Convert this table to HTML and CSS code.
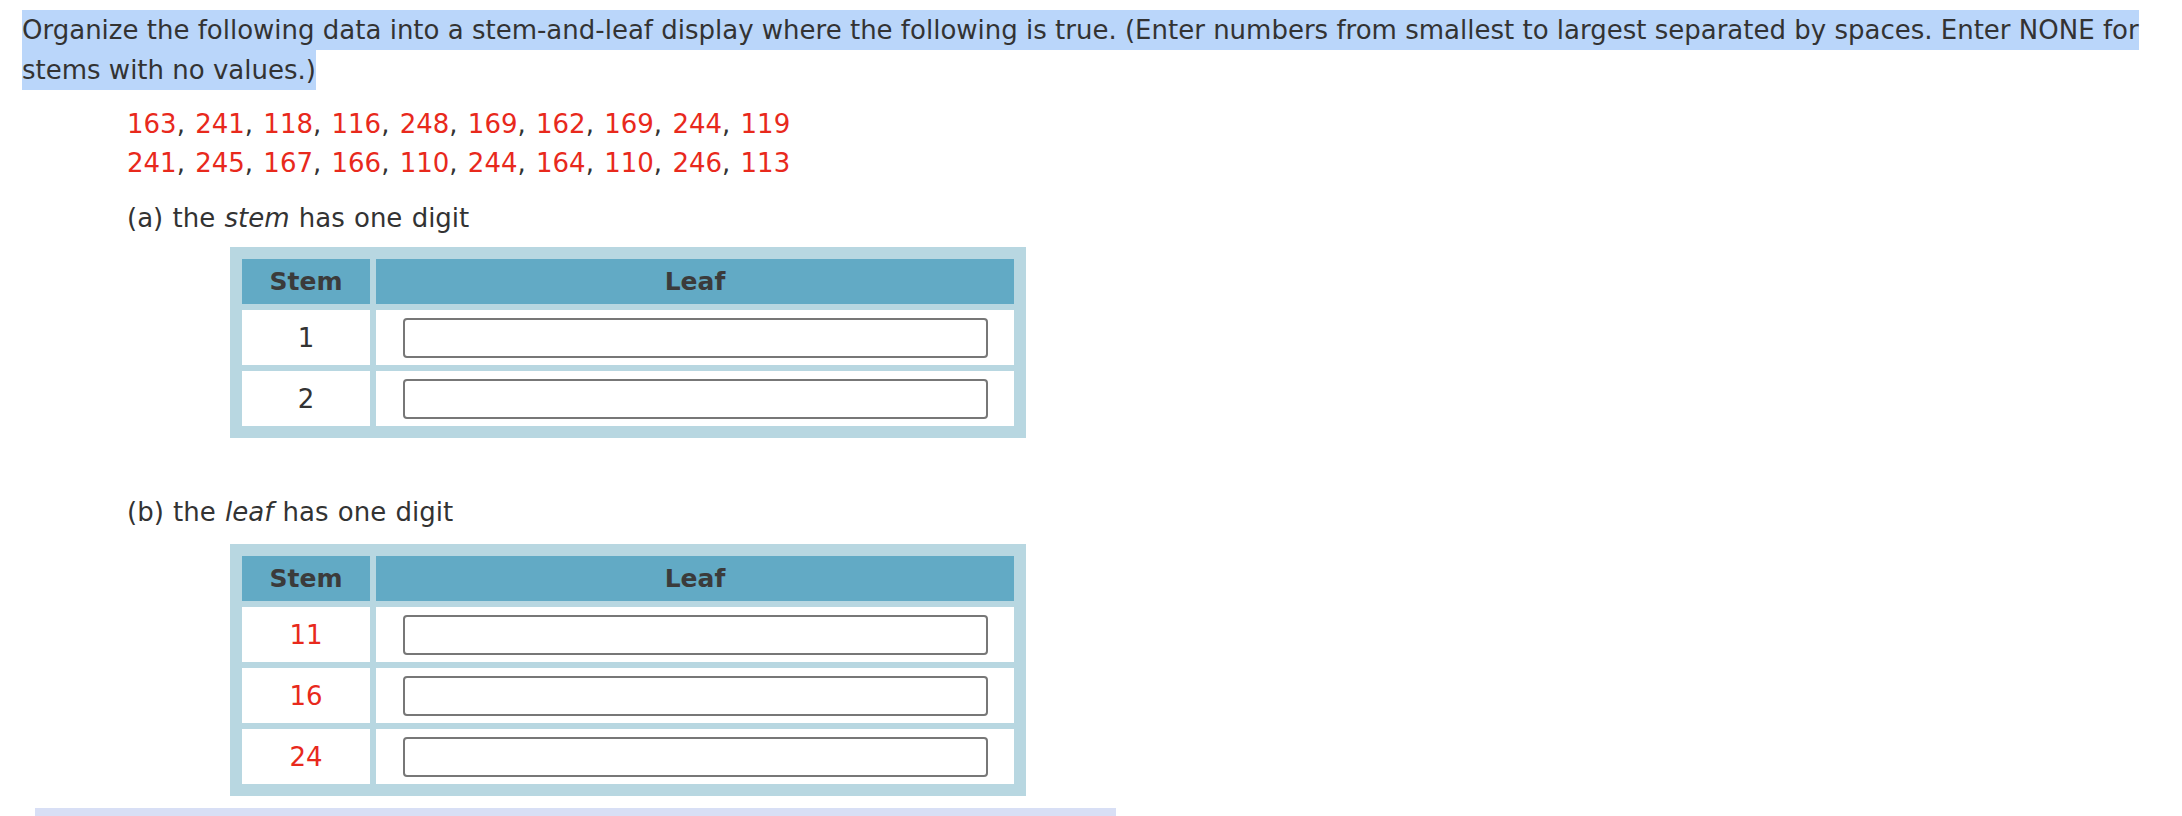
FILE: index.html
```html
<!DOCTYPE html>
<html lang="en">
<head>
  <meta charset="UTF-8" />
  <title>Stem-and-Leaf Display</title>
  <link rel="stylesheet" href="styles.css">
</head>
<body>

  <div class="question">
    <p class="prompt"><span class="hl">Organize the following data into a stem-and-leaf display where the following is true. (Enter numbers from smallest to largest separated by spaces. Enter NONE for stems with no values.)</span></p>

    <div class="data">
      <div><span class="red">163</span>, <span class="red">241</span>, <span class="red">118</span>, <span class="red">116</span>, <span class="red">248</span>, <span class="red">169</span>, <span class="red">162</span>, <span class="red">169</span>, <span class="red">244</span>, <span class="red">119</span></div>
      <div><span class="red">241</span>, <span class="red">245</span>, <span class="red">167</span>, <span class="red">166</span>, <span class="red">110</span>, <span class="red">244</span>, <span class="red">164</span>, <span class="red">110</span>, <span class="red">246</span>, <span class="red">113</span></div>
    </div>

    <p class="part part-a">(a) the <em>stem</em> has one digit</p>
    <div class="frame">
      <table class="stem-leaf">
        <tr><th class="stem">Stem</th><th>Leaf</th></tr>
        <tr><td class="stem">1</td><td><input type="text" /></td></tr>
        <tr><td class="stem">2</td><td><input type="text" /></td></tr>
      </table>
    </div>

    <p class="part part-b">(b) the <em>leaf</em> has one digit</p>
    <div class="frame">
      <table class="stem-leaf">
        <tr><th class="stem">Stem</th><th>Leaf</th></tr>
        <tr><td class="stem red">11</td><td><input type="text" /></td></tr>
        <tr><td class="stem red">16</td><td><input type="text" /></td></tr>
        <tr><td class="stem red">24</td><td><input type="text" /></td></tr>
      </table>
    </div>

    <div class="next-band"></div>
  </div>

</body>
</html>
```

FILE: styles.css
```css
body {
  font-family: Verdana, 'DejaVu Sans', sans-serif;
  font-size: 26px;
  line-height: 40px;
  color: #333333;
  background: #ffffff;
  margin: 0;
  padding-top: 10px;
}

.question {
  padding-left: 22px;
  padding-right: 4px;
}

.prompt {
  margin: 0;
}

.hl {
  background-color: #bad6fa;
  padding: 5px 0;
}

.red {
  color: #e8291c;
}

.data {
  margin: 15px 0 0 105px;
  line-height: 39px;
  word-spacing: 2px;
}

.part {
  margin: 15px 0 0 105px;
  word-spacing: 1px;
}

.part-b {
  margin-top: 54px;
}

.frame {
  background-color: #b8d7e1;
  width: 784px;
  padding: 6px;
  margin: 9px 0 0 208px;
}

.part-b + .frame {
  margin-top: 12px;
}

.stem-leaf {
  width: 100%;
  border-spacing: 6px;
  border-collapse: separate;
}

.stem-leaf th {
  background-color: #62aac5;
  color: #3b3b3b;
  font-size: 25px;
  font-weight: bold;
  height: 45px;
  padding: 0;
  text-align: center;
}

.stem-leaf td {
  background-color: #ffffff;
  height: 55px;
  padding: 0;
  text-align: center;
}

.stem-leaf .stem {
  width: 128px;
}

.stem-leaf input {
  display: block;
  box-sizing: border-box;
  width: 585px;
  height: 40px;
  margin: 0 auto;
  border: 2px solid #777777;
  border-radius: 4px;
  background: #ffffff;
  font-family: inherit;
  font-size: 24px;
}

.next-band {
  background-color: #d8dff5;
  height: 20px;
  width: 1081px;
  margin: 12px 0 0 13px;
}
```
